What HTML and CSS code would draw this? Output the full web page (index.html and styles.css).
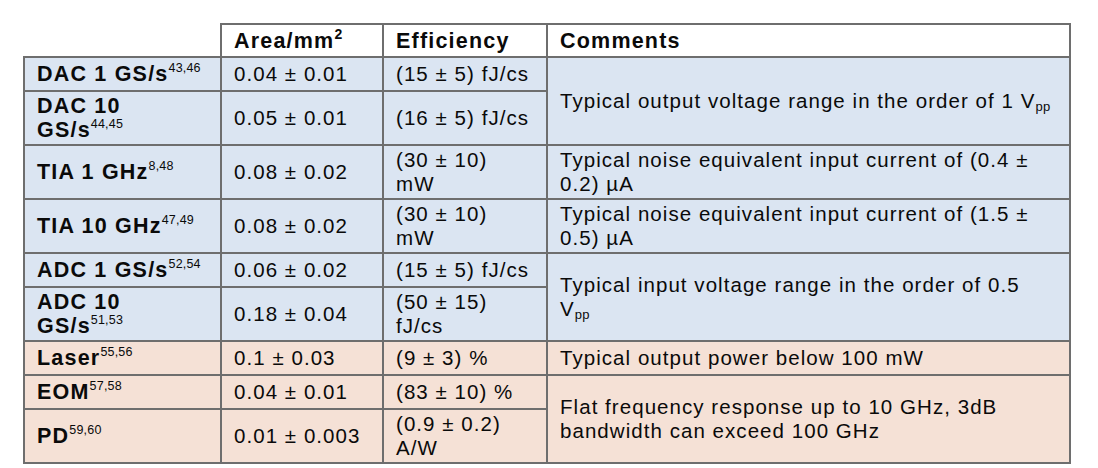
FILE: index.html
```html
<!DOCTYPE html>
<html lang="en">
<head>
<meta charset="utf-8">
<title>Component table</title>
<link rel="stylesheet" href="styles.css">
</head>
<body>
<div class="page">
<table class="spec">
  <colgroup>
    <col class="c-name">
    <col class="c-area">
    <col class="c-eff">
    <col class="c-com">
  </colgroup>
  <thead>
    <tr class="r-head">
      <th class="corner"></th>
      <th>Area/mm<sup>2</sup></th>
      <th>Efficiency</th>
      <th>Comments</th>
    </tr>
  </thead>
  <tbody>
    <tr class="r1 blue">
      <th>DAC 1 GS/s<sup>43,46</sup></th>
      <td>0.04 ± 0.01</td>
      <td>(15 ± 5) fJ/cs</td>
      <td rowspan="2">Typical output voltage range in the order of 1 V<sub>pp</sub></td>
    </tr>
    <tr class="r2 blue">
      <th>DAC 10<br>GS/s<sup>44,45</sup></th>
      <td>0.05 ± 0.01</td>
      <td>(16 ± 5) fJ/cs</td>
    </tr>
    <tr class="r2 blue">
      <th>TIA 1 GHz<sup>8,48</sup></th>
      <td>0.08 ± 0.02</td>
      <td>(30 ± 10)<br>mW</td>
      <td>Typical noise equivalent input current of (0.4 ±<br>0.2) µA</td>
    </tr>
    <tr class="r2 blue">
      <th>TIA 10 GHz<sup>47,49</sup></th>
      <td>0.08 ± 0.02</td>
      <td>(30 ± 10)<br>mW</td>
      <td>Typical noise equivalent input current of (1.5 ±<br>0.5) µA</td>
    </tr>
    <tr class="r1 blue">
      <th>ADC 1 GS/s<sup>52,54</sup></th>
      <td>0.06 ± 0.02</td>
      <td>(15 ± 5) fJ/cs</td>
      <td rowspan="2">Typical input voltage range in the order of 0.5<br>V<sub>pp</sub></td>
    </tr>
    <tr class="r2 blue">
      <th>ADC 10<br>GS/s<sup>51,53</sup></th>
      <td>0.18 ± 0.04</td>
      <td>(50 ± 15)<br>fJ/cs</td>
    </tr>
    <tr class="r1 peach">
      <th>Laser<sup>55,56</sup></th>
      <td>0.1 ± 0.03</td>
      <td>(9 ± 3) %</td>
      <td>Typical output power below 100 mW</td>
    </tr>
    <tr class="r1 peach">
      <th>EOM<sup>57,58</sup></th>
      <td>0.04 ± 0.01</td>
      <td>(83 ± 10) %</td>
      <td rowspan="2">Flat frequency response up to 10 GHz, 3dB<br>bandwidth can exceed 100 GHz</td>
    </tr>
    <tr class="r2 peach">
      <th>PD<sup>59,60</sup></th>
      <td>0.01 ± 0.003</td>
      <td>(0.9 ± 0.2)<br>A/W</td>
    </tr>
  </tbody>
</table>
</div>
</body>
</html>
```

FILE: styles.css
```css
html, body {
  margin: 0;
  padding: 0;
  background: #ffffff;
}

.page {
  padding: 23px 0 0 23px;
  font-family: "Liberation Sans", Arial, sans-serif;
  color: #0a0a0a;
}

.spec {
  border-collapse: collapse;
  table-layout: fixed;
  width: 1046px;
  font-size: 20.5px;
  line-height: 24px;
  letter-spacing: 1.05px;
}

.c-name { width: 197px; }
.c-area { width: 162px; }
.c-eff  { width: 164px; }
.c-com  { width: 523px; }

.spec th,
.spec td {
  border: 2px solid #6e6e6e;
  padding: 0 11px 0 12px;
  vertical-align: middle;
  text-align: left;
  overflow: hidden;
  white-space: nowrap;
}

.spec th {
  font-weight: 700;
  font-size: 21.5px;
  letter-spacing: 1.2px;
}

.spec td {
  font-weight: 400;
}

.spec thead th {
  background: #ffffff;
}

.spec thead th.corner {
  border-top: none;
  border-left: none;
}

.spec sup,
.spec sub {
  font-size: 12.5px;
  line-height: 0;
  font-weight: 400;
  letter-spacing: 0.2px;
}

.spec thead sup {
  font-weight: 700;
  font-size: 14px;
}

.spec sup {
  vertical-align: 9px;
}

.spec sub {
  vertical-align: -3px;
  font-size: 13px;
}

.r-head { height: 33px; }
.r1 { height: 34px; }
.r2 { height: 54px; }

.blue th,
.blue td {
  background: #dbe5f2;
}

.peach th,
.peach td {
  background: #f5e1d6;
}
```
